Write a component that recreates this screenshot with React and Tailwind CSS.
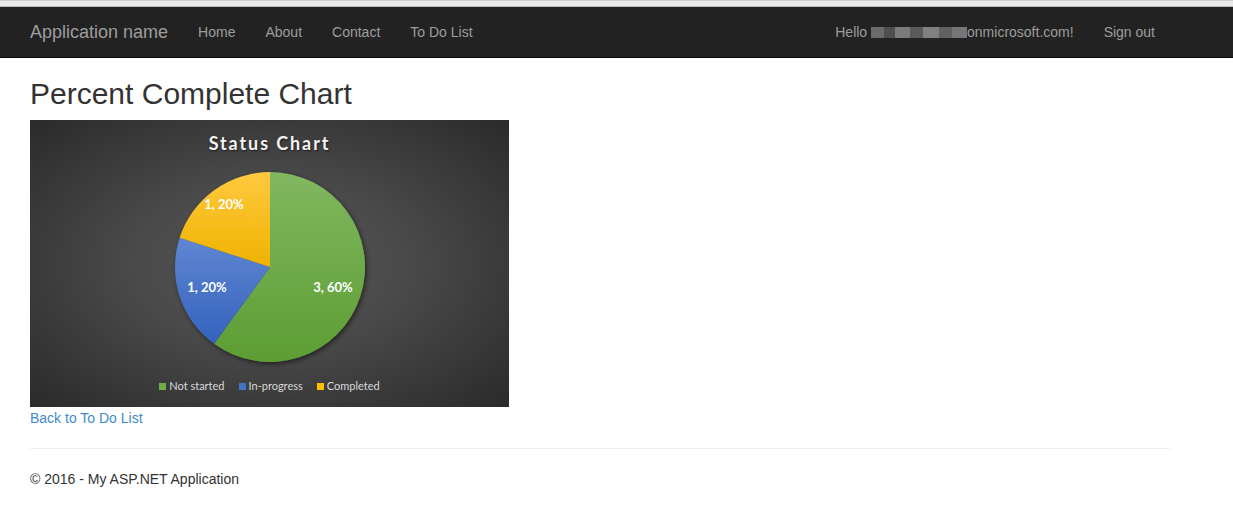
import React from "react";

const navLinks = ["Home", "About", "Contact", "To Do List"];

const legend = [
  { label: "Not started", color: "bg-[#70ad47]" },
  { label: "In-progress", color: "bg-[#4472c4]" },
  { label: "Completed", color: "bg-[#ffc000]" },
];

function PieChart() {
  return (
    <svg width="200" height="200" viewBox="0 0 200 200" className="block overflow-visible">
      <defs>
        <linearGradient id="g-green" x1="0" y1="0" x2="0" y2="1">
          <stop offset="0" stopColor="#81b760" />
          <stop offset="1" stopColor="#5d9d33" />
        </linearGradient>
        <linearGradient id="g-blue" x1="0" y1="0" x2="0" y2="1">
          <stop offset="0" stopColor="#5f86d2" />
          <stop offset="1" stopColor="#3462bd" />
        </linearGradient>
        <linearGradient id="g-yellow" x1="0" y1="0" x2="0" y2="1">
          <stop offset="0" stopColor="#ffc93f" />
          <stop offset="1" stopColor="#efb300" />
        </linearGradient>
        <filter id="pie-shadow" x="-20%" y="-20%" width="140%" height="140%">
          <feDropShadow dx="1.5" dy="2" stdDeviation="2.5" floodColor="#000" floodOpacity="0.55" />
        </filter>
      </defs>
      <g filter="url(#pie-shadow)">
        <path d="M100,100 L100,5 A95,95 0 1,1 44.16,176.86 Z" fill="url(#g-green)" />
        <path d="M100,100 L44.16,176.86 A95,95 0 0,1 9.65,70.64 Z" fill="url(#g-blue)" />
        <path d="M100,100 L9.65,70.64 A95,95 0 0,1 100,5 Z" fill="url(#g-yellow)" />
      </g>
      <g fill="#ffffff" fontFamily="Lato, 'Open Sans', sans-serif" fontWeight="700" fontSize="13" textAnchor="middle" dominantBaseline="central">
        <text x="163" y="120">3, 60%</text>
        <text x="37" y="120">1, 20%</text>
        <text x="54" y="37">1, 20%</text>
      </g>
    </svg>
  );
}

export default function App() {
  return (
    <div className="min-h-[519px] bg-white font-['Liberation_Sans',Arial,sans-serif] text-[14px] leading-[20px] text-[#333]">
      {/* browser strip */}
      <div className="h-[7px] border-t border-b border-t-[#cdcdcd] border-b-[#bcbcbc] bg-[#ebebeb]" />

      <nav className="h-[51px] border-b border-[#080808] bg-[#222]">
        <div className="mx-[15px] flex h-[50px] w-[1170px] items-center justify-between px-[15px]">
          <div className="flex items-center">
            <a className="text-[18px] text-[#9d9d9d]">Application name</a>
            <ul className="ml-[15px] flex">
              {navLinks.map((l) => (
                <li key={l} className="px-[15px] text-[#9d9d9d]">{l}</li>
              ))}
            </ul>
          </div>
          <ul className="flex items-center">
            <li className="flex items-center px-[15px] text-[#9d9d9d]">
              Hello&nbsp;
              <span className="flex h-[11px] items-center">
                <span className="h-[11px] w-[13px] bg-[#6b6b6b]" />
                <span className="h-[11px] w-[11px] bg-[#4e4e4e]" />
                <span className="h-[11px] w-[15px] bg-[#7a7a7a]" />
                <span className="h-[11px] w-[13px] bg-[#5a5a5a]" />
                <span className="h-[11px] w-[16px] bg-[#808080]" />
                <span className="h-[11px] w-[13px] bg-[#606060]" />
                <span className="h-[11px] w-[15px] bg-[#767676]" />
              </span>
              <span>onmicrosoft.com!</span>
            </li>
            <li className="px-[15px] text-[#9d9d9d]">Sign out</li>
          </ul>
        </div>
      </nav>

      <div className="mx-[15px] w-[1170px] px-[15px]">
        <h2 className="mt-[19px] mb-[10px] text-[30px] leading-[33px] text-[#333]">Percent Complete Chart</h2>

        <div className="flex h-[287px] w-[479px] flex-col items-center bg-[radial-gradient(ellipse_at_center,#555555_0%,#4a4a4a_40%,#2a2a2a_100%)] font-['Lato','Open_Sans',sans-serif]">
          <div className="mt-[11px] text-[18px] font-bold leading-[24px] tracking-[1.9px] text-[#f2f2f2] [text-shadow:1px_1px_2px_rgba(0,0,0,0.6)]">
            Status Chart
          </div>
          <div className="mt-[12px]">
            <PieChart />
          </div>
          <div className="mt-[12px] flex items-center gap-[14px] text-[11px] leading-[14px] text-[#d9d9d9]">
            {legend.map((item) => (
              <div key={item.label} className="flex items-center gap-[3px]">
                <span className={`h-[7px] w-[7px] ${item.color}`} />
                <span>{item.label}</span>
              </div>
            ))}
          </div>
        </div>

        <a className="block pt-[1px] text-[#428bca]">Back to To Do List</a>

        <hr className="mt-[20px] mb-[20px] border-t border-[#eee]" />

        <footer>
          <p>© 2016 - My ASP.NET Application</p>
        </footer>
      </div>
    </div>
  );
}
